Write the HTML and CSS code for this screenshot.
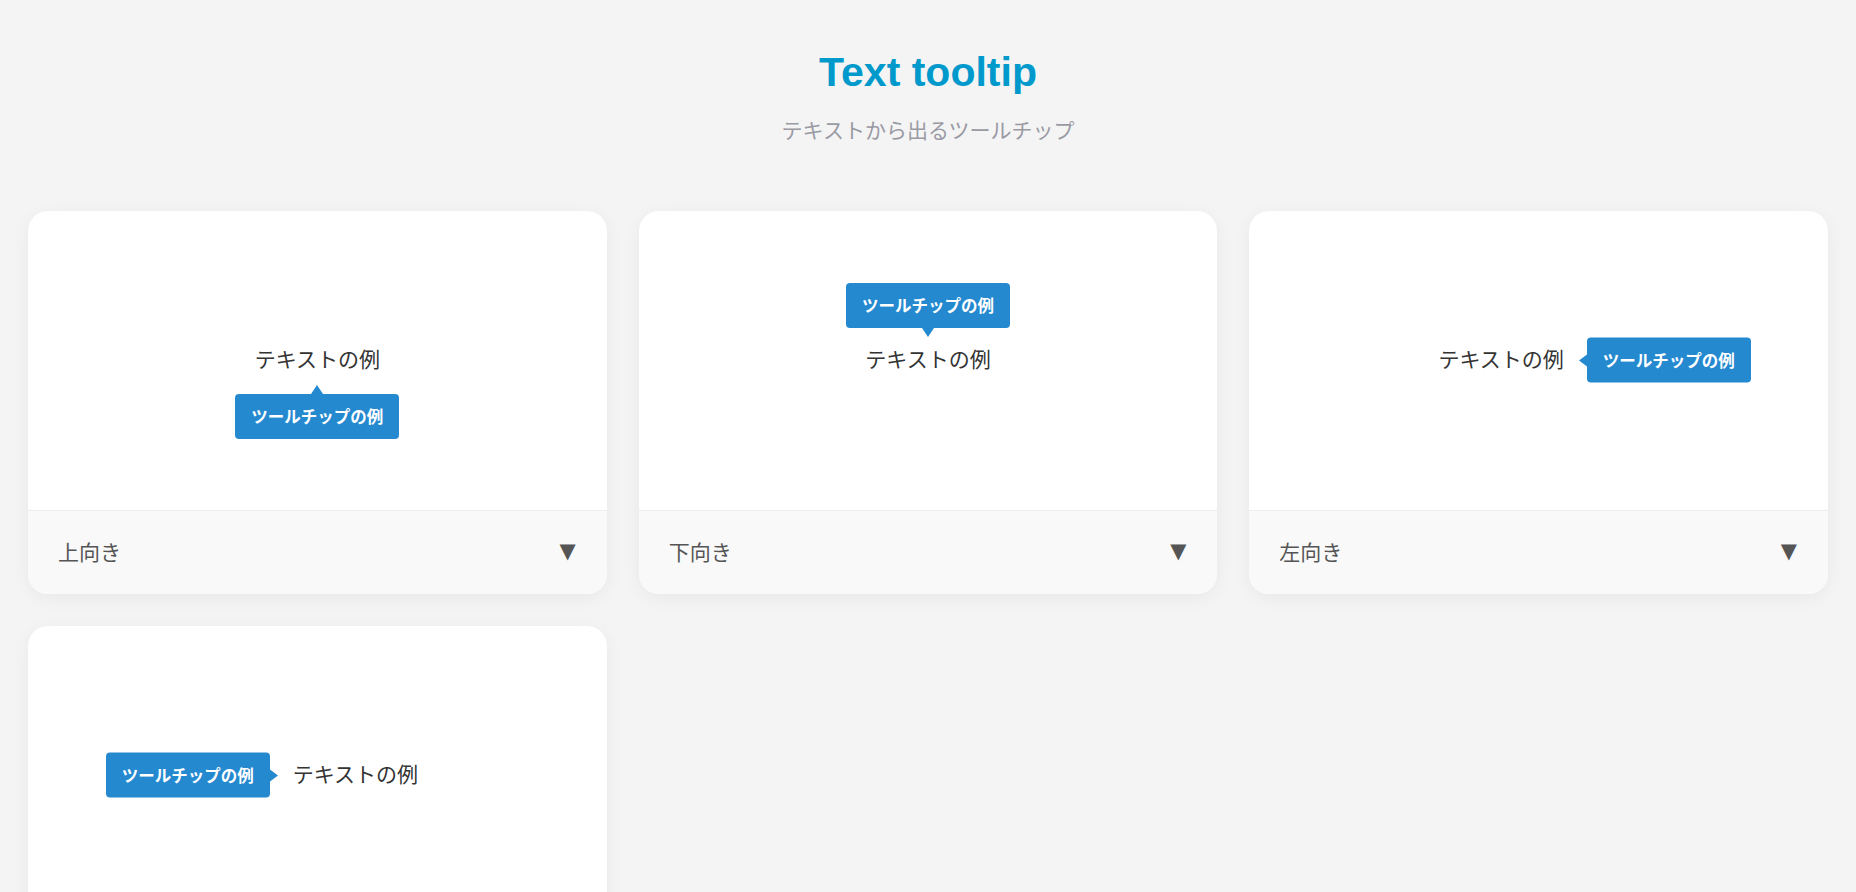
FILE: index.html
```html
<!DOCTYPE html>
<html lang="ja">
  <head>
    <meta charset="UTF-8" />
    <meta name="viewport" content="width=device-width, initial-scale=1.0" />
    <title>Text tooltip</title>
    <link rel="stylesheet" href="styles.css">
  </head>
  <body>
    <!-- Header -->
    <header class="header">
      <h1 class="title">Text tooltip</h1>
      <p class="subtitle">テキストから出るツールチップ</p>
    </header>

    <!-- Samples -->
    <main class="grid">
      <div class="card">
        <div class="preview">
          <span class="trigger">
            テキストの例
            <span class="tooltip tooltip-up">ツールチップの例</span>
          </span>
        </div>
        <div class="card-footer">
          <span class="label">上向き</span>
          <span class="toggle">▼</span>
        </div>
      </div>

      <div class="card">
        <div class="preview">
          <span class="trigger">
            テキストの例
            <span class="tooltip tooltip-down">ツールチップの例</span>
          </span>
        </div>
        <div class="card-footer">
          <span class="label">下向き</span>
          <span class="toggle">▼</span>
        </div>
      </div>

      <div class="card">
        <div class="preview">
          <span class="trigger trigger-left">
            テキストの例
            <span class="tooltip tooltip-left">ツールチップの例</span>
          </span>
        </div>
        <div class="card-footer">
          <span class="label">左向き</span>
          <span class="toggle">▼</span>
        </div>
      </div>

      <div class="card">
        <div class="preview">
          <span class="trigger trigger-right">
            テキストの例
            <span class="tooltip tooltip-right">ツールチップの例</span>
          </span>
        </div>
        <div class="card-footer">
          <span class="label">右向き</span>
          <span class="toggle">▼</span>
        </div>
      </div>
    </main>
  </body>
</html>
```

FILE: styles.css
```css
body {
  margin: 0;
  background-color: #f4f4f4;
  font-family: "Liberation Sans", "Noto Sans CJK JP", sans-serif;
  color: #333;
}
.header {
  padding-top: 48px;
  margin-bottom: 67px;
  text-align: center;
}
.title {
  margin: 0;
  font-size: 41px;
  line-height: 49px;
  font-weight: bold;
  color: #0099cc;
}
.subtitle {
  margin: 17px 0 0;
  font-family: "Noto Sans CJK JP", sans-serif;
  font-size: 21px;
  line-height: 30px;
  color: #9a9aa4;
}
.grid {
  display: grid;
  grid-template-columns: repeat(3, 1fr);
  gap: 32px;
  padding: 0 28px 40px;
}
.card {
  background-color: #fff;
  border-radius: 20px;
  overflow: hidden;
  box-shadow: 0 4px 18px rgba(0, 0, 0, 0.05);
}
.preview {
  box-sizing: border-box;
  height: 299px;
  padding-bottom: 5px;
  display: flex;
  justify-content: center;
  align-items: center;
}
.trigger {
  position: relative;
  font-family: "Noto Sans CJK JP", sans-serif;
  font-size: 21px;
  line-height: 30px;
  color: #333;
}
.trigger-left {
  margin-right: 75px;
}
.trigger-right {
  margin-left: 76px;
}
.tooltip {
  position: absolute;
  padding: 10px 16px;
  border-radius: 4px;
  background-color: #2589d0;
  color: #fff;
  font-size: 16.5px;
  line-height: 25px;
  font-weight: bold;
  white-space: nowrap;
}
.tooltip::before {
  content: "";
  position: absolute;
  border-style: solid;
  border-color: transparent;
}
.tooltip-up {
  top: calc(100% + 21px);
  left: 50%;
  transform: translateX(-50%);
}
.tooltip-up::before {
  bottom: 100%;
  left: 50%;
  margin-left: -6px;
  border-width: 0 6px 9px;
  border-bottom-color: #2589d0;
}
.tooltip-down {
  bottom: calc(100% + 15px);
  left: 50%;
  transform: translateX(-50%);
}
.tooltip-down::before {
  top: 100%;
  left: 50%;
  margin-left: -6px;
  border-width: 9px 6px 0;
  border-top-color: #2589d0;
}
.tooltip-left {
  left: calc(100% + 23px);
  top: calc(50% + 2px);
  transform: translateY(-50%);
}
.tooltip-left::before {
  right: 100%;
  top: 50%;
  margin-top: -6px;
  border-width: 6px 8px 6px 0;
  border-right-color: #2589d0;
}
.tooltip-right {
  right: calc(100% + 23px);
  top: calc(50% + 2px);
  transform: translateY(-50%);
}
.tooltip-right::before {
  left: 100%;
  top: 50%;
  margin-top: -6px;
  border-width: 6px 0 6px 8px;
  border-left-color: #2589d0;
}
.card-footer {
  display: flex;
  justify-content: space-between;
  align-items: center;
  padding: 25px 31px 28px 30px;
  border-top: 1px solid #eee;
  background-color: #f9f9f9;
}
.label {
  font-family: "Noto Sans CJK JP", sans-serif;
  font-size: 21px;
  line-height: 30px;
  color: #555;
}
.toggle {
  font-family: "DejaVu Sans", sans-serif;
  font-size: 21px;
  line-height: 30px;
  color: #555;
}
```
